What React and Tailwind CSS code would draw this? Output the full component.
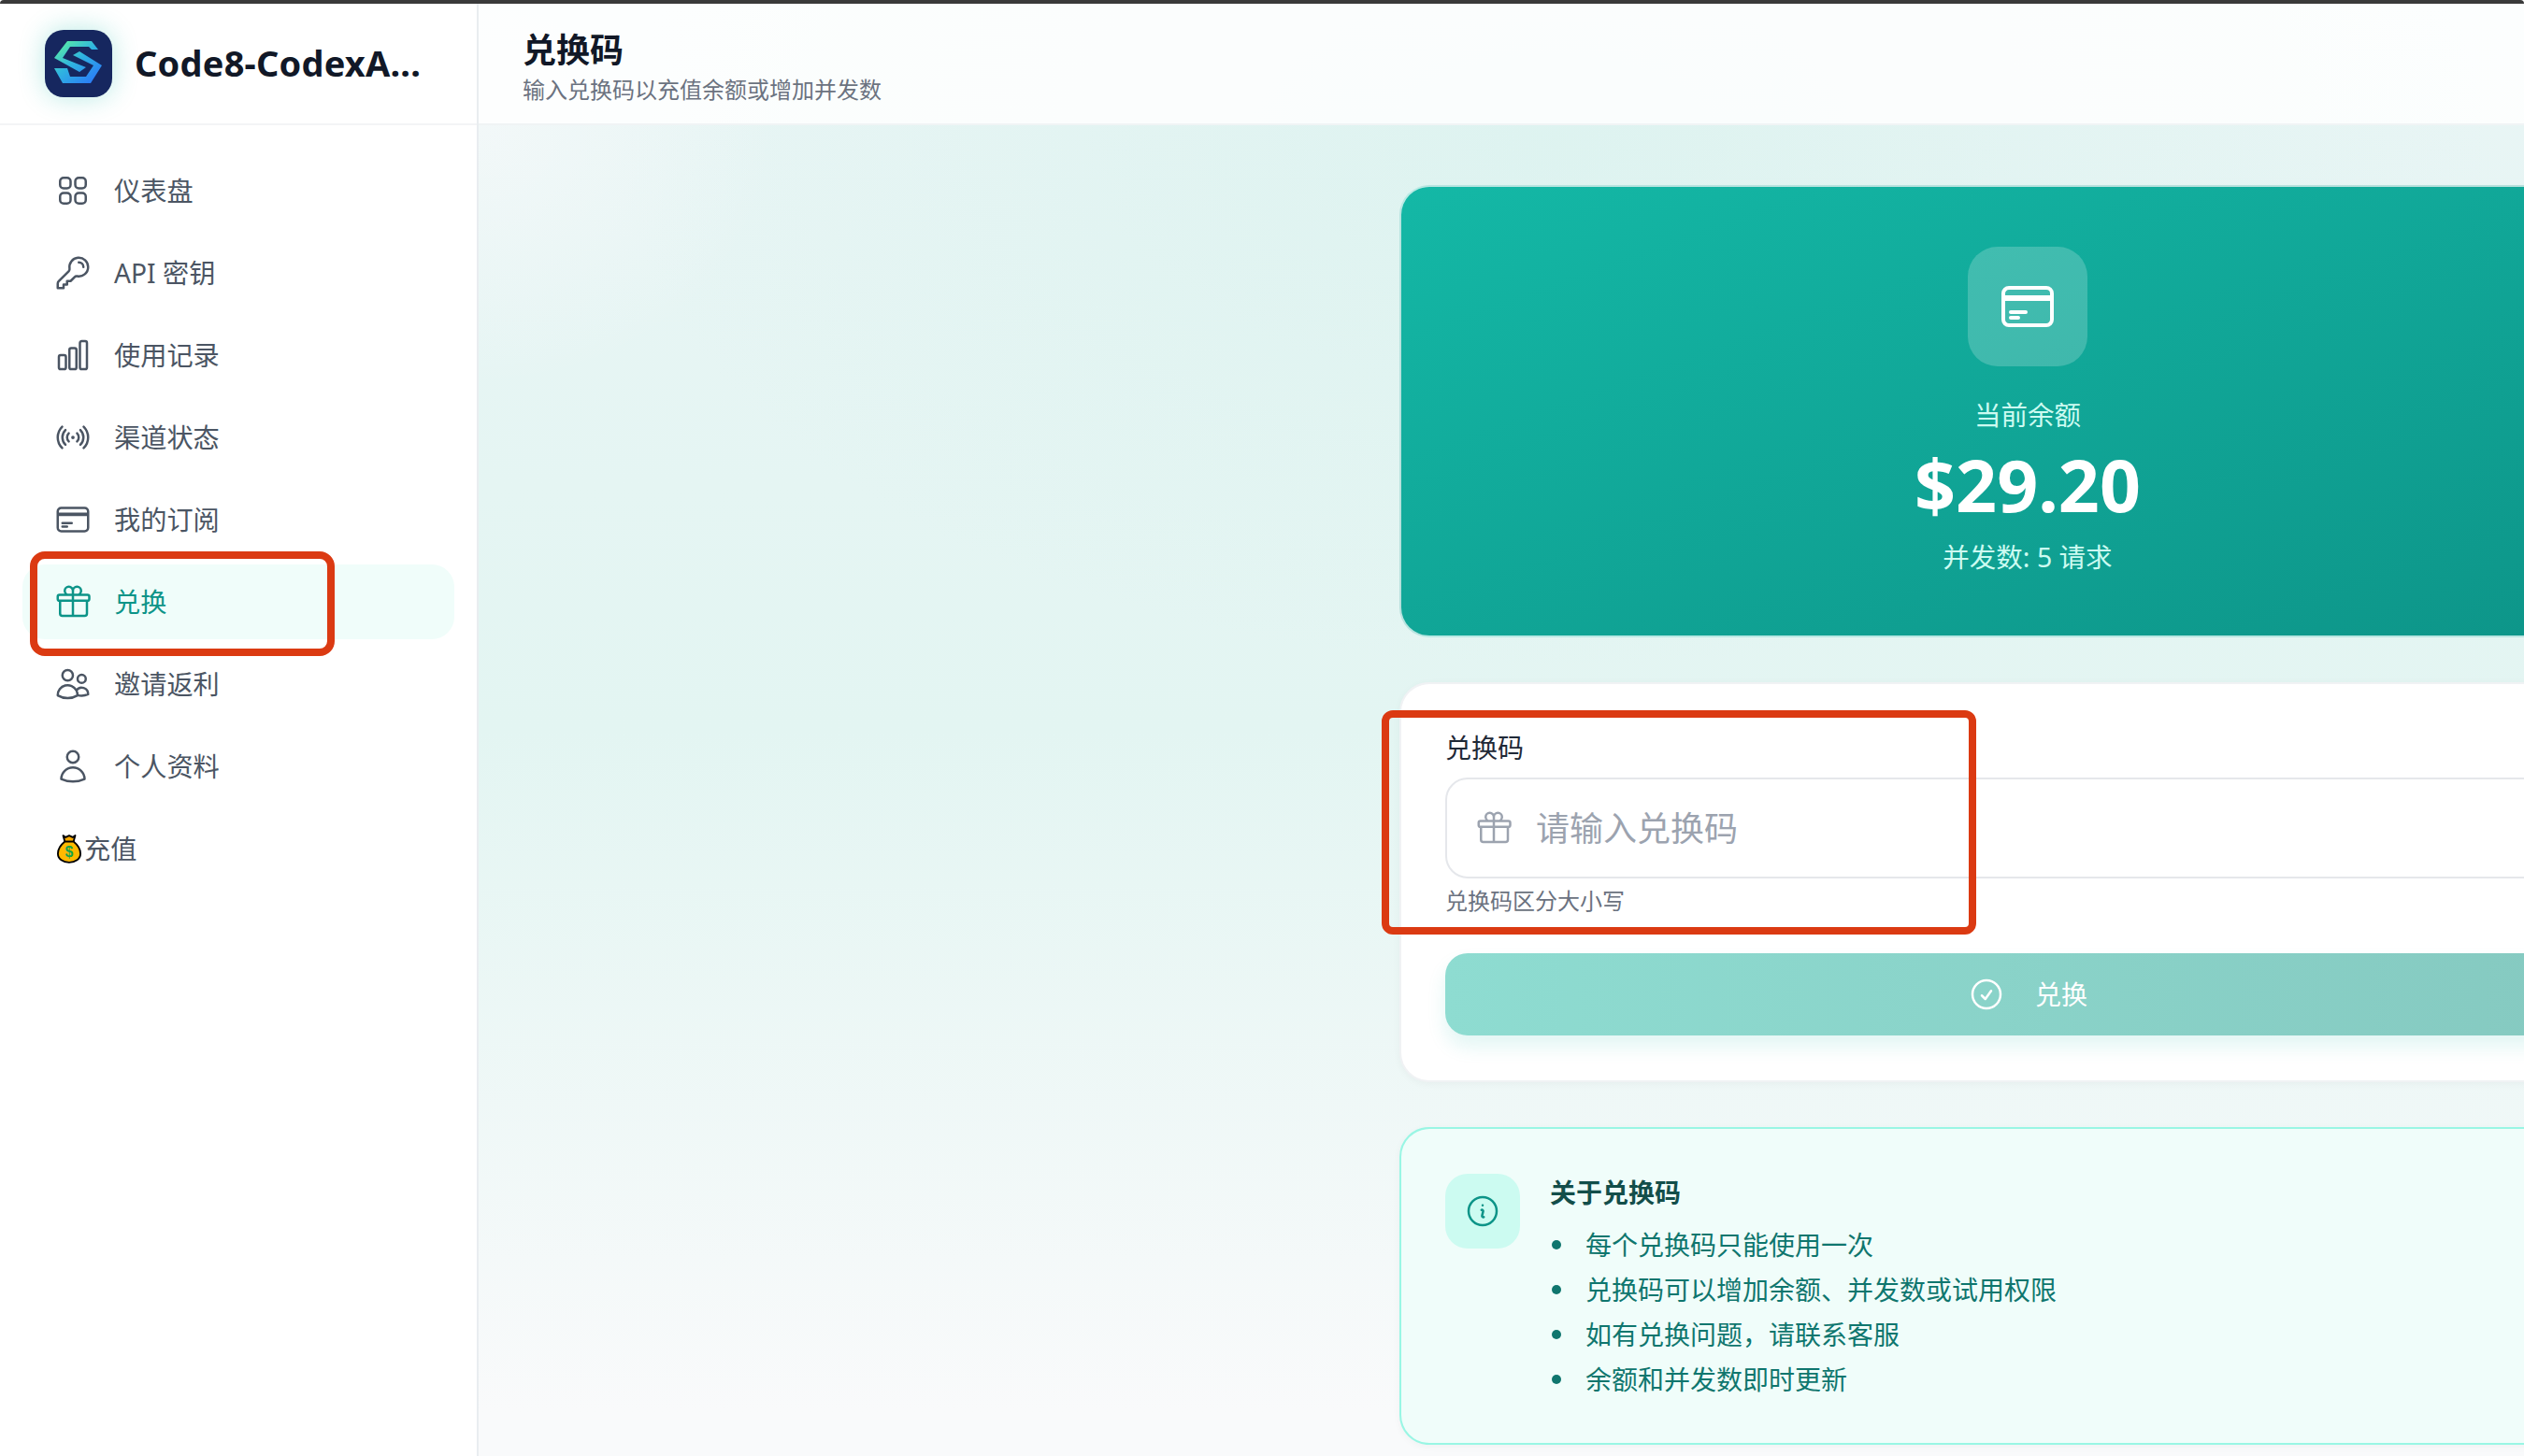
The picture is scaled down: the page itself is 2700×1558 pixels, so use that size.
import React from "react";
import {
  HiOutlineSquares2X2,
  HiOutlineKey,
  HiOutlineChartBar,
  HiOutlineSignal,
  HiOutlineCreditCard,
  HiOutlineGift,
  HiOutlineUsers,
  HiOutlineUser,
  HiOutlineCheckCircle,
  HiOutlineInformationCircle,
} from "react-icons/hi2";

const FONT = "font-['Noto_Sans','Noto_Sans_CJK_SC',sans-serif]";

const NAV = [
  { label: "仪表盘", icon: HiOutlineSquares2X2 },
  { label: "API 密钥", icon: HiOutlineKey },
  { label: "使用记录", icon: HiOutlineChartBar },
  { label: "渠道状态", icon: HiOutlineSignal },
  { label: "我的订阅", icon: HiOutlineCreditCard },
  { label: "兑换", icon: HiOutlineGift, active: true },
  { label: "邀请返利", icon: HiOutlineUsers },
  { label: "个人资料", icon: HiOutlineUser },
];

const NOTES = [
  "每个兑换码只能使用一次",
  "兑换码可以增加余额、并发数或试用权限",
  "如有兑换问题，请联系客服",
  "余额和并发数即时更新",
];

function Logo() {
  return (
    <div className="w-[72px] h-[72px] shrink-0 rounded-[20px] bg-[#16275f] flex items-center justify-center shadow-[0_0_28px_rgba(20,184,166,0.3)]">
      <svg viewBox="0 0 72 72" className="w-[72px] h-[72px]">
        <defs>
          <linearGradient id="logoS" gradientUnits="userSpaceOnUse" x1="12" y1="14" x2="46" y2="58">
            <stop offset="0" stopColor="#5ef0a0" />
            <stop offset="0.5" stopColor="#2fb4e0" />
            <stop offset="1" stopColor="#2b7ff5" />
          </linearGradient>
        </defs>
        <path fill="url(#logoS)" d="M57 21L50 12H24L10 30L37 45L44 40L19 30L27 18H47L50 21Z" />
        <path fill="url(#logoS)" d="M30 27L37 23L61 38L49 57H19L10 41H24L27 50H44L52 38Z" />
      </svg>
    </div>
  );
}

function MoneyBag() {
  return (
    <svg viewBox="0 0 28 34" className="w-[26px] h-[32px] shrink-0">
      <path d="M7 2l3 2 4-2 4 2 3-2-2 7H9z" fill="#f5a800" stroke="#000" strokeWidth="2" strokeLinejoin="round" />
      <path d="M9 9h10c5 4 8 9 8 14 0 6-6 10-13 10S1 29 1 23C1 18 4 13 9 9z" fill="#ffb900" stroke="#000" strokeWidth="2" />
      <text x="14" y="27" textAnchor="middle" fontSize="17" fontWeight="700" fill="#16a34a" fontFamily="Liberation Sans, sans-serif">$</text>
    </svg>
  );
}

function Sidebar() {
  return (
    <aside className="w-[512px] shrink-0 bg-white border-r-2 border-[#e9edf0] flex flex-col">
      <div className="h-[130px] flex items-center gap-6 pl-12 border-b-2 border-[#f3f4f6]">
        <Logo />
        <span className="text-[38px] leading-none font-bold text-[#111827] tracking-[0.2px] -translate-y-[1px]">Code8-CodexA...</span>
      </div>
      <nav className="px-6 pt-[30px] flex flex-col gap-2">
        {NAV.map(({ label, icon: Icon, active }) => (
          <div
            key={label}
            className={`h-20 flex items-center gap-6 pl-[34px] rounded-3xl text-[28.2px] ${active ? "bg-[#f0fdfa] text-[#0d9488]" : "text-[#4b5563]"}`}
          >
            <Icon className="w-10 h-10 shrink-0" />
            <span>{label}</span>
          </div>
        ))}
        <div className="h-20 flex items-center pl-[37px] text-[28.2px] text-[#4b5563]">
          <MoneyBag />
          <span className="ml-[3px]">充值</span>
        </div>
      </nav>
    </aside>
  );
}

function Header() {
  return (
    <header className="h-[130px] shrink-0 bg-white/85 border-b-2 border-[#f0f4f5] pl-[47px] pt-[28px]">
      <h1 className="text-[36px] leading-[44px] font-bold text-[#111827]">兑换码</h1>
      <p className="mt-[2px] text-[24px] leading-[36px] text-[#6b7280]">输入兑换码以充值余额或增加并发数</p>
    </header>
  );
}

function BalanceCard() {
  return (
    <section className="rounded-[32px] border-2 border-white/70 bg-gradient-to-br from-[#14b8a6] to-[#0d9488] py-16 flex flex-col items-center text-center">
      <div className="w-32 h-32 rounded-[32px] bg-white/20 flex items-center justify-center">
        <HiOutlineCreditCard className="w-16 h-16 text-white" />
      </div>
      <p className="mt-8 text-[28.5px] leading-10 text-[#ccfbf1]">当前余额</p>
      <p className="mt-4 text-[77px] leading-[78px] font-bold text-white">$29.20</p>
      <p className="mt-[18px] text-[28.5px] leading-10 text-[#ccfbf1]">并发数: 5 请求</p>
    </section>
  );
}

function RedeemForm() {
  return (
    <section className="rounded-[32px] bg-white border-2 border-[#f0f2f4] py-12 px-[47px] shadow-[0_2px_8px_rgba(0,0,0,0.04)]">
      <label className="block text-[28px] leading-10 text-[#1f2937]">兑换码</label>
      <div className="mt-3 h-[108px] rounded-3xl border-2 border-[#e5e7eb] bg-white flex items-center pl-[30px] gap-[25px]">
        <HiOutlineGift className="w-10 h-10 text-[#9ca3af] shrink-0" />
        <span className="pt-[2px] text-[36px] text-[#9ca3af]">请输入兑换码</span>
      </div>
      <p className="mt-2 text-[24px] leading-8 text-[#6b7280]">兑换码区分大小写</p>
      <button className="mt-10 w-full h-[88px] rounded-3xl bg-gradient-to-r from-[#8edcd1] to-[#85c9c0] text-white text-[28px] flex items-center justify-center gap-[32px] shadow-[0_12px_20px_rgba(20,184,166,0.12)]">
        <HiOutlineCheckCircle className="w-10 h-10" />
        <span>兑换</span>
      </button>
    </section>
  );
}

function InfoCard() {
  return (
    <section className="rounded-[32px] bg-[#f0fdfa] border-2 border-[#99f6e4] py-12 px-[47px] flex gap-8 shadow-[0_2px_8px_rgba(0,0,0,0.04)]">
      <div className="w-20 h-20 rounded-3xl bg-[#ccfbf1] flex items-center justify-center shrink-0">
        <HiOutlineInformationCircle className="w-10 h-10 text-[#0d9488]" />
      </div>
      <div>
        <h2 className="text-[28px] leading-10 font-bold text-[#134e4a]">关于兑换码</h2>
        <ul className="mt-4 flex flex-col gap-2">
          {NOTES.map((note) => (
            <li key={note} className="flex items-center text-[28px] leading-10 text-[#0f766e]">
              <span className="w-2.5 h-2.5 rounded-full bg-[#0f766e] mr-[26px] ml-[2px] shrink-0" />
              {note}
            </li>
          ))}
        </ul>
      </div>
    </section>
  );
}

export default function App() {
  return (
    <div className={`relative w-[2700px] h-[1558px] overflow-hidden bg-white flex flex-col ${FONT}`}>
      <div className="h-1 shrink-0 bg-[#3a3a3a] rounded-t-lg" />
      <div className="flex-1 min-h-0 flex">
        <Sidebar />
        <main className="w-[3314px] shrink-0 flex flex-col bg-[radial-gradient(ellipse_1000px_560px_at_1150px_150px,rgba(206,240,233,0.4),transparent),radial-gradient(ellipse_320px_280px_at_0px_130px,rgba(249,250,251,0.6),transparent),linear-gradient(to_bottom,#e9f5f5,#e3f5f2_50%,#f9fafb_97%)]">
          <Header />
          <div className="w-[1344px] mx-auto pt-16 flex flex-col gap-12">
            <BalanceCard />
            <RedeemForm />
            <InfoCard />
          </div>
        </main>
      </div>
      {/* red annotation boxes drawn over the shot */}
      <div className="absolute left-[32px] top-[590px] w-[326px] h-[112px] border-8 border-[#db3a12] rounded-2xl" />
      <div className="absolute left-[1478px] top-[760px] w-[636px] h-[240px] border-8 border-[#db3a12] rounded-xl" />
    </div>
  );
}
